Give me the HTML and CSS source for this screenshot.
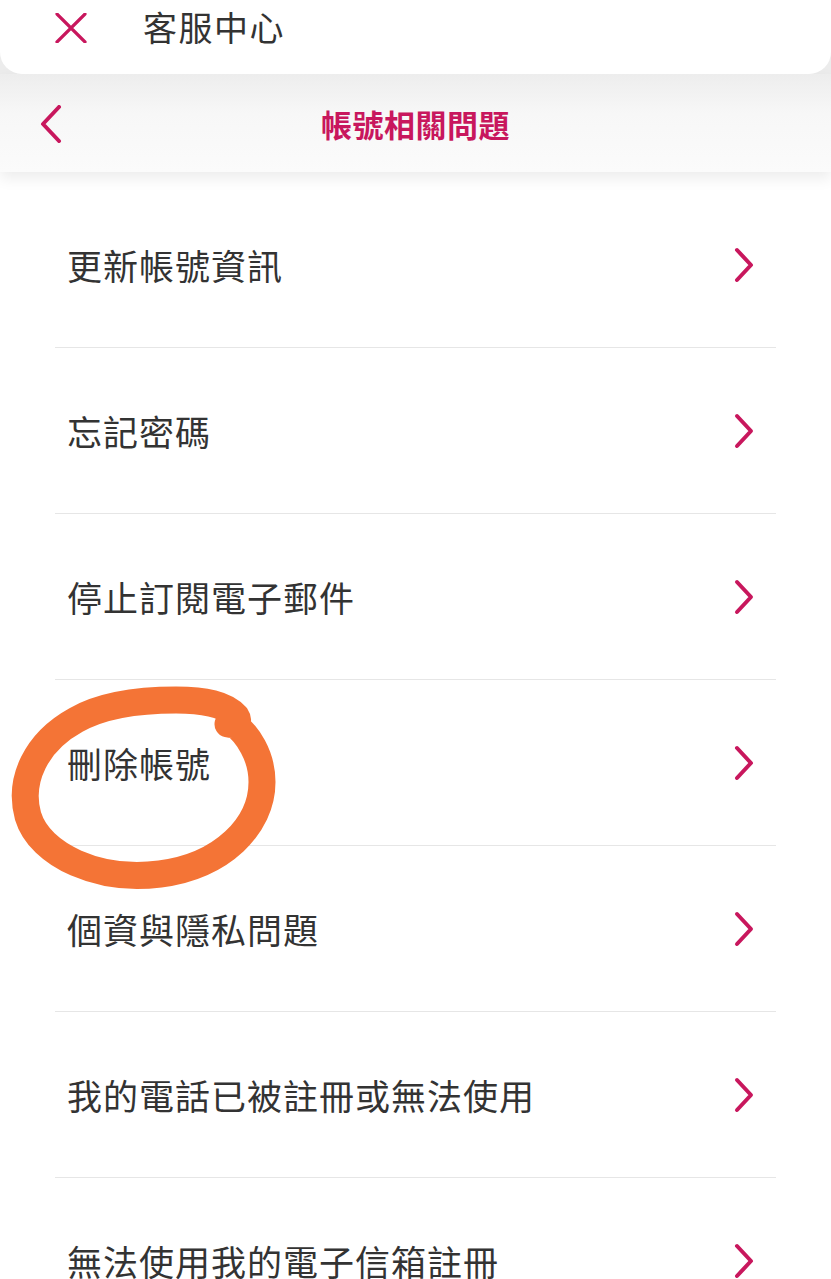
FILE: index.html
```html
<!DOCTYPE html>
<html lang="zh-Hant">
<head>
  <meta charset="UTF-8">
  <meta name="viewport" content="width=device-width, initial-scale=1.0">
  <title>帳號相關問題</title>
  <link rel="stylesheet" href="styles.css">
</head>
<body>
  <!-- Top bar -->
  <div class="top-bar">
    <svg class="close-icon" width="32" height="30" viewBox="0 0 32 30">
      <path d="M2 1 L30 29 M30 1 L2 29" stroke="#c8175d" stroke-width="3.2" fill="none" stroke-linecap="round"/>
    </svg>
    <span class="top-title">客服中心</span>
  </div>

  <!-- Section header -->
  <div class="section-header">
    <svg class="back-icon" width="22" height="38" viewBox="0 0 22 38">
      <path d="M19 2 L3 19 L19 36" stroke="#c8175d" stroke-width="4" fill="none" stroke-linecap="round" stroke-linejoin="round"/>
    </svg>
    <h1 class="section-title">帳號相關問題</h1>
  </div>

  <!-- Question list -->
  <ul class="faq-list">
    <li class="faq-item"><span>更新帳號資訊</span><svg class="chev" width="20" height="36" viewBox="0 0 20 36"><path d="M3 3 L17 18 L3 33"/></svg></li>
    <li class="faq-item"><span>忘記密碼</span><svg class="chev" width="20" height="36" viewBox="0 0 20 36"><path d="M3 3 L17 18 L3 33"/></svg></li>
    <li class="faq-item"><span>停止訂閱電子郵件</span><svg class="chev" width="20" height="36" viewBox="0 0 20 36"><path d="M3 3 L17 18 L3 33"/></svg></li>
    <li class="faq-item"><span>刪除帳號</span><svg class="chev" width="20" height="36" viewBox="0 0 20 36"><path d="M3 3 L17 18 L3 33"/></svg></li>
    <li class="faq-item"><span>個資與隱私問題</span><svg class="chev" width="20" height="36" viewBox="0 0 20 36"><path d="M3 3 L17 18 L3 33"/></svg></li>
    <li class="faq-item"><span>我的電話已被註冊或無法使用</span><svg class="chev" width="20" height="36" viewBox="0 0 20 36"><path d="M3 3 L17 18 L3 33"/></svg></li>
    <li class="faq-item"><span>無法使用我的電子信箱註冊</span><svg class="chev" width="20" height="36" viewBox="0 0 20 36"><path d="M3 3 L17 18 L3 33"/></svg></li>
  </ul>

  <!-- hand drawn mark -->
  <svg class="scribble" width="300" height="230" viewBox="0 0 300 230">
    <path d="M232 46 C248 58 262 80 262 106 C262 150 222 190 160 198 C100 206 40 180 28 140 C18 104 36 66 76 44 C104 28 140 24 176 24 C205 24 225 28 236 40 C240 46 236 50 228 48"
          stroke="#f47436" stroke-width="27" fill="none" stroke-linecap="round" stroke-linejoin="round"/>
  </svg>
</body>
</html>
```

FILE: styles.css
```css
body {
  margin: 0;
  background: #ececec;
  font-family: "Noto Sans CJK TC", "Noto Sans", sans-serif;
  color: #333;
  overflow: hidden;
  position: relative;
}

.top-bar {
  background: #fff;
  height: 74px;
  border-radius: 0 0 22px 22px;
  display: flex;
  align-items: center;
  padding: 0 0 22px 55px;
  box-sizing: border-box;
  position: relative;
  z-index: 2;
}

.close-icon {
  margin-top: 4px;
}

.top-title {
  margin-left: 56px;
  font-size: 34px;
  letter-spacing: 1.5px;
  color: #333;
}

.section-header {
  height: 98px;
  background: linear-gradient(#ededed, #f7f7f7 40%, #fbfbfb);
  display: flex;
  align-items: center;
  justify-content: center;
  position: relative;
  box-shadow: 0 6px 14px rgba(0, 0, 0, 0.08);
  z-index: 1;
}

.back-icon {
  position: absolute;
  left: 40px;
  top: 31px;
}

.section-title {
  margin: 0;
  font-size: 31px;
  font-weight: 700;
  color: #c8175d;
  letter-spacing: 0.5px;
}

.faq-list {
  list-style: none;
  margin: 0;
  padding: 10px 55px 0;
  background: #fff;
  height: 1200px;
}

.faq-item {
  height: 165px;
  border-bottom: 1px solid #e6e6e6;
  display: flex;
  align-items: center;
  justify-content: space-between;
  padding: 0 12px;
  font-size: 35px;
  letter-spacing: 1px;
  color: #333;
}

.chev {
  margin-right: 10px;
}

.chev path {
  stroke: #c8175d;
  stroke-width: 4;
  fill: none;
  stroke-linecap: round;
  stroke-linejoin: round;
}

.scribble {
  position: absolute;
  left: 0;
  top: 676px;
  pointer-events: none;
}
```
